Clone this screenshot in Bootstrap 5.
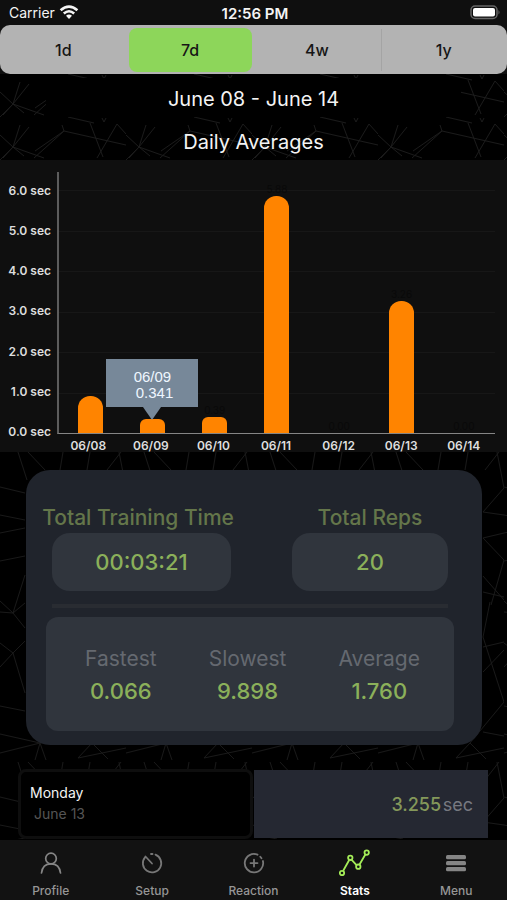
<!DOCTYPE html>
<html lang="en">
<head>
<meta charset="utf-8">
<meta name="viewport" content="width=device-width, initial-scale=1">
<title>Stats</title>
<link href="https://cdn.jsdelivr.net/npm/bootstrap@5.3.0/dist/css/bootstrap.min.css" rel="stylesheet">
<style>
body { background: #000; color: #f4f4f4; font-family: Inter, "Liberation Sans", sans-serif; }
.status { background: #0f0f0f; height: 25px; font-size: 14px; line-height: 27px; padding: 0 6px 0 9px; }
.status > * { flex: 1 1 0; }
.clock { font-size: 15px; font-weight: 600; }
.range-wrap { background: #0f0f0f; }
.range { background: #b3b3b3; border-radius: 10px; height: 49px; padding: 3px 0 2px; }
.range .btn { --bs-btn-color: #161616; --bs-btn-active-color: #161616; --bs-btn-active-bg: #8dd65a; --bs-btn-active-border-color: #8dd65a; --bs-btn-border-width: 0px; --bs-btn-font-weight: 500; flex: 1 1 0; font-size: 16px; line-height: 44px; padding: 0; margin: 0 2px !important; border-radius: 8px !important; }
.range .split { box-shadow: -2px 0 0 -1px #a4a4a4; border-radius: 0 !important; }
.mesh { position: absolute; inset: 0; width: 100%; height: 100%; z-index: -1; }
.layer { position: relative; z-index: 0; }
.heading { font-size: 20px; font-weight: 400; line-height: 36px; margin: 0; padding-top: 7px; }
.heading-solid { background: #000; margin: 0 46px; padding-top: 3px; }
.chart { background: #0f0f0f; height: 292px; padding: 11px 12px 0 0; }
.y-axis { width: 57px; padding-right: 6px; font-size: 12px; font-weight: 600; color: #dedede; white-space: nowrap; }
.y-axis > div { flex: 1; }
.x-axis { height: 18px; font-size: 12px; font-weight: 600; line-height: 24px; color: #dedede; }
.x-axis > div, .bars > div { flex: 1 1 0; text-align: center; }
.plot { margin-top: 1px; border-left: 2px solid #5c5c5c; border-bottom: 1px solid #858585; position: relative; }
.rules { position: absolute; inset: 18px 0 0; }
.rules > div { flex: 1; border-top: 1px solid #171717; }
.bars { height: 100%; position: relative; }
.bar { width: 25px; margin: 0 auto; background: #ff8400; border-radius: 12px 12px 0 0; }
.bar-low { border-radius: 6px 6px 0 0; }
.val { font-size: 10px; line-height: 14px; color: #090909; }
.tip { position: absolute; bottom: 100%; left: 50%; width: 92px; height: 48px; margin: 0 0 12px -46px; padding: 10px 0 0; background: #778899; color: #eef6ff; font: 15px/16px "Liberation Sans", sans-serif; white-space: pre; }
.tip::after { content: ""; position: absolute; top: 100%; left: 50%; margin-left: -9px; border: 9px solid transparent; border-top: 13px solid #778899; border-bottom: 0; }
.summary { background: #20242c; border-radius: 24px; margin: 18px 25px 0 26px; padding: 32px 28px 14px 14px; }
.summary-label { color: #64764a; font-size: 21px; font-weight: 500; line-height: 31px; white-space: nowrap; }
.pill { background: #30353d; border-radius: 18px; height: 58px; line-height: 58px; }
.pill, .figure { color: #8bb05a; font-size: 22px; font-weight: 500; }
.time { width: 196px; }
.time-pill { margin: 0 5px 0 12px; }
.reps { width: 156px; margin-right: 6px; }
.rule { height: 4px; background: #292c32; margin: 13px 6px 9px 12px; }
.trio { background: #30353d; border-radius: 12px; height: 114px; padding: 26px 34px 0 39px; margin-left: 6px; }
.trio dt { color: #656970; font-size: 21px; font-weight: 400; line-height: 32px; }
.trio dd { line-height: 33px; margin: 0; }
.day { height: 70px; margin: 24px 19px 0 18px; gap: 1px; }
.day > * { flex: 0 1 50%; }
.day-date { background: #000; border: 3px solid #0e0e0e; border-radius: 8px; font-size: 14px; line-height: 21px; padding: 10px 9px; }
.day-date .sub { color: #555; padding-left: 4px; }
.day-time { background: #252832; font-size: 18px; line-height: 69px; padding-right: 15px; margin: 1px 0; }
.day-time b { color: #84985a; font-weight: 500; }
.day-time span { color: #777980; }
.tabs { background: #121212; height: 60px; font-size: 12px; font-weight: 500; }
.tabs a { flex: 1 1 0; color: #969696; text-decoration: none; text-align: center; padding-top: 7px; line-height: 18px; }
.tabs a.on { color: #fff; font-weight: 600; }
.tabs svg { display: block; margin: 0 auto 3px; }
</style>
<script src="https://cdn.jsdelivr.net/npm/bootstrap@5.3.0/dist/js/bootstrap.bundle.min.js"></script>
</head>
<body class="d-flex flex-column min-vh-100">
<header>
  <div class="status d-flex">
    <div class="d-flex align-items-center gap-1">Carrier
      <svg width="20" height="15" viewBox="0 0 20 15" aria-hidden="true"><g fill="none" stroke="#f4f4f4" stroke-width="2.6"><path d="M1.6 5.2Q10-2 18.4 5.2"/><path d="M4.8 8.500Q10 4 15.200 8.500"/></g><path d="M10 14l-3-3.200q3-2.400 6 0z" fill="#f4f4f4"/></svg>
    </div>
    <div class="clock text-center">12:56 PM</div>
    <div class="d-flex justify-content-end align-items-center">
      <svg width="31" height="15" viewBox="0 0 31 15" aria-hidden="true"><rect x="1" y="1" width="26" height="12.500" rx="4" fill="none" stroke="#666" stroke-width="1.500"/><rect x="3" y="3" width="22" height="8.600" rx="2" fill="#fff"/><path d="M28.500 5q2 2.300 0 4.600z" fill="#666"/></svg>
    </div>
  </div>
  <div class="range-wrap">
    <div class="range btn-group d-flex" role="group" aria-label="Range">
      <input class="btn-check" type="radio" name="range" id="r1"><label class="btn" for="r1">1d</label>
      <input class="btn-check" type="radio" name="range" id="r2" checked><label class="btn" for="r2">7d</label>
      <input class="btn-check" type="radio" name="range" id="r3"><label class="btn" for="r3">4w</label>
      <input class="btn-check" type="radio" name="range" id="r4"><label class="btn split" for="r4">1y</label>
    </div>
  </div>
</header>
<main class="flex-grow-1">
  <div class="layer text-center pt-1">
    <svg class="mesh" aria-hidden="true">
      <defs>
        <pattern id="band" width="126" height="43" patternUnits="userSpaceOnUse">
          <path d="M0 18L13 30L0 43M20 8L13 30L24 39M35 34L64 14L62 8M64 14L34 41M64 14L126 28M68 0L94 6M90 6L103 40M117 7L97 41M117 7L126 17M13 30L3 41M13 30L44 41M29 10L13 30M102 1l2 4 2-4" fill="none" stroke="#1b1b1b"/>
        </pattern>
        <pattern id="net" width="126" height="310" patternUnits="userSpaceOnUse">
          <path d="M18 0L27 28M28 0L45 18M63 0L60 18M90 0L87 18M121 0L107 18M119 0L126 36L105 60M0 35L25 41M0 63L25 68M105 60L126 63M0 81L25 76M105 86L126 81M105 86L126 108M0 109L25 104M25 123L13 161L0 149M126 108L113 153M105 124L126 148M13 161L25 151M13 161L25 176M0 160L13 161M0 191L13 201L25 189M13 201L25 241M13 201L0 215M105 140L126 145M112 150L105 185L126 250M105 195L126 190M105 220L126 198M126 250L92 291M0 254L25 259M0 282L40 291L0 301M40 291L35 308M40 291L46 308M92 291L78 306M92 291L108 307M78 306L126 296M105 280L126 284" fill="none" stroke="#191919"/>
        </pattern>
      </defs>
      <rect width="100%" height="43" fill="url(#band)"/>
      <rect y="43" width="100%" height="43" fill="url(#band)"/>
    </svg>
    <h1 class="heading heading-solid">June 08 - June 14</h1>
    <h2 class="heading">Daily Averages</h2>
  </div>
  <section class="chart d-flex" aria-label="Daily averages chart">
    <div class="y-axis d-flex flex-column flex-shrink-0">
      <div class="d-flex align-items-center justify-content-end">6.0 sec</div>
      <div class="d-flex align-items-center justify-content-end">5.0 sec</div>
      <div class="d-flex align-items-center justify-content-end">4.0 sec</div>
      <div class="d-flex align-items-center justify-content-end">3.0 sec</div>
      <div class="d-flex align-items-center justify-content-end">2.0 sec</div>
      <div class="d-flex align-items-center justify-content-end">1.0 sec</div>
      <div class="d-flex align-items-center justify-content-end">0.0 sec</div>
    </div>
    <div class="flex-grow-1 d-flex flex-column">
      <div class="plot flex-grow-1">
        <div class="rules d-flex flex-column"><div></div><div></div><div></div><div></div><div></div><div></div></div>
        <div class="bars d-flex align-items-end">
          <div class="h-100 d-flex flex-column justify-content-end"><div class="bar" style="height:14%"></div></div>
          <div class="h-100 d-flex flex-column justify-content-end"><div class="bar bar-low position-relative" style="height:5.3%"><div class="tip">06/09
 0.341</div></div></div>
          <div class="h-100 d-flex flex-column justify-content-end"><div class="val">0.39</div><div class="bar bar-low" style="height:6.1%"></div></div>
          <div class="h-100 d-flex flex-column justify-content-end"><div class="val">5.88</div><div class="bar" style="height:91%"></div></div>
          <div class="h-100 d-flex flex-column justify-content-end"><div class="val">0.00</div></div>
          <div class="h-100 d-flex flex-column justify-content-end"><div class="val">3.26</div><div class="bar" style="height:50.4%"></div></div>
          <div class="h-100 d-flex flex-column justify-content-end"><div class="val">0.00</div></div>
        </div>
      </div>
      <div class="x-axis d-flex"><div>06/08</div><div>06/09</div><div>06/10</div><div>06/11</div><div>06/12</div><div>06/13</div><div>06/14</div></div>
    </div>
  </section>
  <div class="layer overflow-hidden">
    <svg class="mesh" aria-hidden="true"><rect width="100%" height="100%" fill="url(#net)"/></svg>
    <section class="summary">
      <div class="d-flex justify-content-between text-center">
        <div class="time"><div class="summary-label">Total Training Time</div><div class="pill time-pill">00:03:21</div></div>
        <div class="reps"><div class="summary-label">Total Reps</div><div class="pill">20</div></div>
      </div>
      <div class="rule"></div>
      <dl class="trio d-flex justify-content-between text-center mb-0">
        <div><dt>Fastest</dt><dd class="figure">0.066</dd></div>
        <div><dt>Slowest</dt><dd class="figure">9.898</dd></div>
        <div><dt>Average</dt><dd class="figure">1.760</dd></div>
      </dl>
    </section>
    <section class="day d-flex">
      <div class="day-date"><div>Monday</div><div class="sub">June 13</div></div>
      <div class="day-time text-end"><b>3.255</b><span>&#8202;sec</span></div>
    </section>
  </div>
</main>
<nav class="tabs d-flex" aria-label="Main">
  <a href="#profile"><svg width="32" height="32" viewBox="0 0 32 32" fill="none" stroke="#858585" stroke-width="1.700" stroke-linecap="round"><circle cx="16" cy="11.500" r="5.300"/><path d="M6.500 26q1-9.200 9.500-9.200T25.500 26"/></svg>Profile</a>
  <a href="#setup"><svg width="32" height="32" viewBox="0 0 32 32" fill="none" stroke="#777" stroke-width="1.800" stroke-linecap="round"><path d="M19.500 7.700A9.200 9.200 0 1 1 9 10.300M9.500 9.500l6.500 7" /><path d="M15 7h1.500"/></svg>Setup</a>
  <a href="#reaction"><svg width="32" height="32" viewBox="0 0 32 32" fill="none" stroke="#777" stroke-width="1.800" stroke-linecap="round"><path d="M19.500 7.700A9.200 9.200 0 1 0 24.900 14M22.300 9.700l1.200 1.500M16 12.600v7M12.500 16.100h7"/></svg>Reaction</a>
  <a href="#stats" class="on" aria-current="page"><svg width="32" height="32" viewBox="0 0 32 32" fill="none" stroke="#a4ec58" stroke-width="1.800"><path d="M4.200 23.700L10.200 13M12.500 12.700l5 5.400M20.500 17.500l6-10.200"/><circle cx="3" cy="26" r="2.200"/><circle cx="11.300" cy="10.800" r="2.200"/><circle cx="19.300" cy="19.700" r="2.200"/><circle cx="27.700" cy="5.600" r="2.200"/></svg>Stats</a>
  <a href="#menu"><svg width="32" height="32" viewBox="0 0 32 32" fill="#858585"><rect x="6" y="8" width="20" height="4.200" rx="1.500"/><rect x="6" y="14" width="20" height="4.200" rx="1.500"/><rect x="6" y="20" width="20" height="4.200" rx="1.500"/></svg>Menu</a>
</nav>
</body>
</html>
